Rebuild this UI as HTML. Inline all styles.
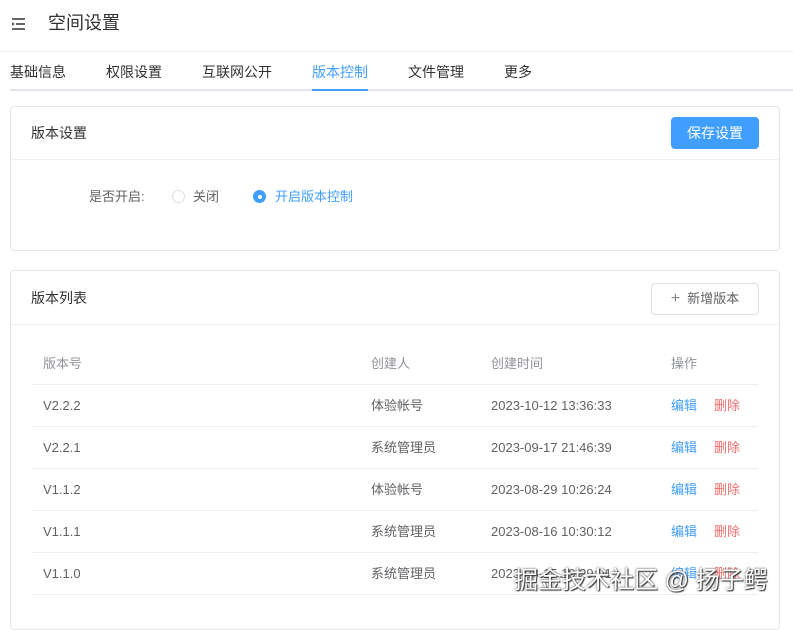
<!DOCTYPE html><html><head><meta charset="utf-8"><style>
*{box-sizing:border-box;margin:0;padding:0}
body{width:793px;height:615px;overflow:hidden;background:#fff;font-family:"Liberation Sans","Noto Sans CJK SC",sans-serif;color:#333;position:relative}
.abs{position:absolute;line-height:1.2}
.card{position:absolute;left:10px;width:770px;border:1px solid #e6e6e6;border-radius:4px;background:#fff}
.row{position:absolute;left:32px;width:726px;height:42px;border-bottom:1px solid #ebeef5;font-size:13px;color:#606266}
.row span{position:absolute;top:0;line-height:42px;height:42px}
</style></head><body>
<svg class="abs" style="left:11px;top:17px" width="16" height="14" viewBox="0 0 16 14">
<rect x="1" y="1" width="13" height="2" fill="#666"/><rect x="5" y="6" width="9" height="2" fill="#666"/><rect x="1" y="11" width="13" height="2" fill="#666"/><path d="M1 5 L4 7 L1 9 Z" fill="#666"/></svg>
<div class="abs" style="left:48px;top:13px;font-size:18px;color:#303133">空间设置</div>
<div class="abs" style="left:0;top:51px;width:793px;height:1px;background:#eee"></div>
<div class="abs" style="left:10px;top:64px;font-size:14px;color:#303133">基础信息</div>
<div class="abs" style="left:106px;top:64px;font-size:14px;color:#303133">权限设置</div>
<div class="abs" style="left:202px;top:64px;font-size:14px;color:#303133">互联网公开</div>
<div class="abs" style="left:312px;top:64px;font-size:14px;color:#409eff">版本控制</div>
<div class="abs" style="left:408px;top:64px;font-size:14px;color:#303133">文件管理</div>
<div class="abs" style="left:504px;top:64px;font-size:14px;color:#303133">更多</div>
<div class="abs" style="left:10px;top:89px;width:783px;height:2px;background:#e4e7ed"></div>
<div class="abs" style="left:312px;top:89px;width:56px;height:2px;background:#409eff"></div>

<div class="card" style="top:106px;height:145px">
<div class="abs" style="left:20px;top:18px;font-size:14px;color:#303133">版本设置</div>
<div class="abs" style="left:660px;top:10px;width:88px;height:32px;background:#409eff;border-radius:4px;color:#fff;font-size:14px;text-align:center;line-height:32px">保存设置</div>
<div class="abs" style="left:0;top:52px;width:768px;height:1px;background:#ebeef5"></div>
<div class="abs" style="left:78px;top:82px;font-size:13px;color:#606266;line-height:16px">是否开启:</div>
<div class="abs" style="left:161px;top:83px;width:13px;height:13px;border:1px solid #dcdfe6;border-radius:50%"></div>
<div class="abs" style="left:182px;top:82px;font-size:13px;color:#606266;line-height:16px">关闭</div>
<div class="abs" style="left:242px;top:83px;width:13px;height:13px;background:#409eff;border-radius:50%"><div style="width:4px;height:4px;background:#fff;border-radius:50%;margin:4.5px"></div></div>
<div class="abs" style="left:264px;top:82px;font-size:13px;color:#409eff;line-height:16px">开启版本控制</div>
</div>

<div class="card" style="top:270px;height:360px">
<div class="abs" style="left:20px;top:19px;font-size:14px;color:#303133">版本列表</div>
<div class="abs" style="left:640px;top:12px;width:108px;height:32px;border:1px solid #dcdfe6;border-radius:4px;font-size:13px;color:#606266;line-height:30px;text-align:center"><span style="color:#888;font-size:16px">+</span>&nbsp; 新增版本</div>
<div class="abs" style="left:0;top:53px;width:768px;height:1px;background:#ebeef5"></div>
</div>
<div class="row" style="top:343px;color:#909399"><span style="left:11px">版本号</span><span style="left:339px">创建人</span><span style="left:459px">创建时间</span><span style="left:639px">操作</span></div>
<div class="row" style="top:385px"><span style="left:11px">V2.2.2</span><span style="left:339px">体验帐号</span><span style="left:459px">2023-10-12 13:36:33</span><span style="left:639px;color:#409eff">编辑</span><span style="left:682px;color:#f56c6c">删除</span></div>
<div class="row" style="top:427px"><span style="left:11px">V2.2.1</span><span style="left:339px">系统管理员</span><span style="left:459px">2023-09-17 21:46:39</span><span style="left:639px;color:#409eff">编辑</span><span style="left:682px;color:#f56c6c">删除</span></div>
<div class="row" style="top:469px"><span style="left:11px">V1.1.2</span><span style="left:339px">体验帐号</span><span style="left:459px">2023-08-29 10:26:24</span><span style="left:639px;color:#409eff">编辑</span><span style="left:682px;color:#f56c6c">删除</span></div>
<div class="row" style="top:511px"><span style="left:11px">V1.1.1</span><span style="left:339px">系统管理员</span><span style="left:459px">2023-08-16 10:30:12</span><span style="left:639px;color:#409eff">编辑</span><span style="left:682px;color:#f56c6c">删除</span></div>
<div class="row" style="top:553px"><span style="left:11px">V1.1.0</span><span style="left:339px">系统管理员</span><span style="left:459px">2023-08-15 19:29:01</span><span style="left:639px;color:#409eff">编辑</span><span style="left:682px;color:#f56c6c">删除</span></div>
<div class="abs" style="left:514px;top:566px;font-size:24px;line-height:30px;color:#fff;white-space:nowrap;text-shadow:0 0 2px #333,1px 1px 1px #333">掘金技术社区 @ 扬子鳄</div>
</body></html>
